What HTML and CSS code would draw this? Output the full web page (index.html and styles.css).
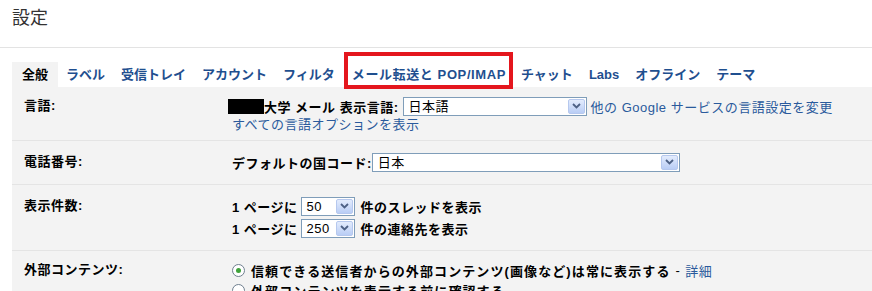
FILE: index.html
```html
<!DOCTYPE html>
<html lang="ja">
<head>
    <meta charset="UTF-8">
    <title>設定</title>
    <link rel="stylesheet" href="styles.css">
</head>
<body>

    <header class="page-title">設定</header>

    <nav class="tabs">
        <a class="tab active">全般</a>
        <a class="tab">ラベル</a>
        <a class="tab">受信トレイ</a>
        <a class="tab">アカウント</a>
        <a class="tab">フィルタ</a>
        <a class="tab marked">メール転送と POP/IMAP</a>
        <a class="tab">チャット</a>
        <a class="tab">Labs</a>
        <a class="tab">オフライン</a>
        <a class="tab">テーマ</a>
    </nav>

    <div class="panel">
        <div class="row row-lang">
            <div class="label">言語:</div>
            <div class="value">
                <div class="line">
                    <span class="redacted"></span><b>大学 メール 表示言語:</b>
                    <span class="select sel-lang"><span class="sel-text">日本語</span><span class="sel-btn"><svg width="9" height="6" viewBox="0 0 9 6"><path d="M1 1l3.5 3.5L8 1" fill="none" stroke="#4d6185" stroke-width="1.8"/></svg></span></span>
                    <a class="link">他の Google サービスの言語設定を変更</a>
                </div>
                <div class="line2"><a class="link">すべての言語オプションを表示</a></div>
            </div>
        </div>

        <div class="row row-phone">
            <div class="label">電話番号:</div>
            <div class="value">
                <div class="line">
                    <b>デフォルトの国コード:</b>
                    <span class="select sel-country"><span class="sel-text">日本</span><span class="sel-btn"><svg width="9" height="6" viewBox="0 0 9 6"><path d="M1 1l3.5 3.5L8 1" fill="none" stroke="#4d6185" stroke-width="1.8"/></svg></span></span>
                </div>
            </div>
        </div>

        <div class="row row-count">
            <div class="label">表示件数:</div>
            <div class="value">
                <div class="line">
                    <b>1 ページに</b>
                    <span class="select sel-num"><span class="sel-text">50</span><span class="sel-btn"><svg width="9" height="6" viewBox="0 0 9 6"><path d="M1 1l3.5 3.5L8 1" fill="none" stroke="#4d6185" stroke-width="1.8"/></svg></span></span>
                    <b>件のスレッドを表示</b>
                </div>
                <div class="line">
                    <b>1 ページに</b>
                    <span class="select sel-num"><span class="sel-text">250</span><span class="sel-btn"><svg width="9" height="6" viewBox="0 0 9 6"><path d="M1 1l3.5 3.5L8 1" fill="none" stroke="#4d6185" stroke-width="1.8"/></svg></span></span>
                    <b>件の連絡先を表示</b>
                </div>
            </div>
        </div>

        <div class="row row-ext">
            <div class="label">外部コンテンツ:</div>
            <div class="value">
                <div class="line">
                    <span class="radio checked"></span><b>信頼できる送信者からの外部コンテンツ(画像など)は常に表示する</b><span class="dash">-</span><a class="link">詳細</a>
                </div>
                <div class="line">
                    <span class="radio"></span><b>外部コンテンツを表示する前に確認する</b>
                </div>
            </div>
        </div>
    </div>

</body>
</html>
```

FILE: styles.css
```css
body {
    font-family: "Liberation Sans", "Noto Sans CJK JP", sans-serif;
    font-size: 13px;
    letter-spacing: 0.5px;
    margin: 0;
    padding: 0;
    background-color: #fff;
    color: #000;
}

.page-title {
    height: 48px;
    box-sizing: border-box;
    padding: 6px 0 0 12px;
    font-size: 18px;
    line-height: 24px;
    letter-spacing: 0;
    color: #333;
    border-bottom: 1px solid #e3e3e3;
}

.tabs {
    display: flex;
    margin: 14px 0 0 12px;
    height: 25px;
    letter-spacing: 0;
}

.tab {
    position: relative;
    padding: 0 8px;
    line-height: 25px;
    font-weight: bold;
    color: #1f4f8f;
    white-space: nowrap;
}

.tab.active {
    padding: 0 10px;
    background-color: #f3f3f3;
    color: #000;
}

.tab.marked {
    padding: 0 7px 0 9px;
    letter-spacing: 0.6px;
}

.tab.marked::after {
    content: "";
    position: absolute;
    left: 1px;
    right: 0;
    top: -10px;
    bottom: -2px;
    border: 4px solid #e4161d;
}

.panel {
    margin-left: 12px;
    background-color: #f3f3f3;
    height: 204px;
}

.row {
    display: flex;
    border-bottom: 1px solid #e4e4e4;
}

.label {
    width: 208px;
    padding-left: 12px;
    font-weight: bold;
    line-height: 20px;
    flex-shrink: 0;
}

.value {
    white-space: nowrap;
}

.line {
    display: flex;
    align-items: center;
    height: 20px;
}

.line2 {
    height: 18px;
    line-height: 18px;
}

.row-lang {
    padding: 9px 0 6px 0;
}

.row-phone {
    padding: 11px 0 12px 0;
}

.row-count {
    padding: 10px 0 11px 0;
}

.row-count .line {
    height: 22px;
}

.row-count .label {
    line-height: 22px;
}

.row-ext {
    padding: 9px 0 0 0;
    border-bottom: none;
}

.row-ext b {
    letter-spacing: 1.1px;
}

.link {
    color: #2a5a9c;
}

.dash {
    margin: 0 5px;
}

.redacted {
    display: inline-block;
    width: 36px;
    height: 15px;
    margin-left: -4px;
    background-color: #000;
}

.select {
    display: inline-flex;
    align-items: center;
    height: 19px;
    box-sizing: border-box;
    border: 1px solid #7f9db9;
    background-color: #fff;
    margin: 0 4px 0 3px;
}

.sel-text {
    flex: 1;
    padding-left: 5px;
    line-height: 17px;
    font-weight: normal;
}

.sel-btn {
    display: flex;
    align-items: center;
    justify-content: center;
    width: 17px;
    height: 15px;
    margin-right: 1px;
    border: 1px solid #b6c8ee;
    border-radius: 2px;
    box-sizing: border-box;
    background: linear-gradient(#e3ecfd, #b9cdf5);
}

.sel-lang {
    width: 184px;
    margin-left: 4px;
}

.sel-country {
    width: 308px;
    margin-left: 0;
}

.sel-num {
    width: 54px;
    margin-right: 6px;
}

.sel-num .sel-text {
    font-family: "Liberation Sans", sans-serif;
}

.radio {
    display: inline-block;
    width: 11px;
    height: 11px;
    border: 1px solid #6f7f8f;
    border-radius: 50%;
    background-color: #fff;
    margin: 0 6px 0 0;
    position: relative;
}

.radio.checked::after {
    content: "";
    position: absolute;
    left: 3px;
    top: 3px;
    width: 5px;
    height: 5px;
    border-radius: 50%;
    background-color: #3fa23a;
}
```
